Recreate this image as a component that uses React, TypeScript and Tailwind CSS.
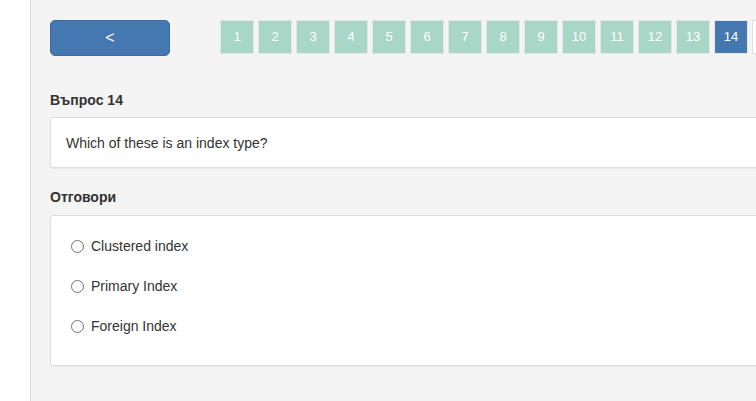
import React from "react";

export default function App() {
  const pages = Array.from({ length: 14 }, (_, i) => i + 1);
  const answers = ["Clustered index", "Primary Index", "Foreign Index"];
  return (
    <div
      className="flex w-[756px] h-[401px] overflow-hidden bg-[#f4f4f4] text-[#333]"
      style={{ fontFamily: '"Liberation Sans", Arial, sans-serif' }}
    >
      <div className="w-[31px] shrink-0 bg-white border-r border-[#dcdcdc]" />
      <div className="shrink-0 w-[900px] pl-[19px] pt-[20px]">
        <div className="flex items-start">
          <button className="w-[120px] h-[36px] rounded-[5px] bg-[#4577b0] border border-[#3d6ba0] text-white text-[16px] flex items-center justify-center">
            &lt;
          </button>
          <div className="flex gap-[4px] ml-[50px]">
            {pages.map((p) => (
              <div
                key={p}
                className={
                  p === 14
                    ? "w-[34px] h-[34px] flex items-center justify-center text-[13px] text-white bg-[#4577b0] border border-[#e8e8e8]"
                    : "w-[34px] h-[34px] flex items-center justify-center text-[13px] text-white bg-[#a8d7c8] border border-[#e6e6e6]"
                }
              >
                {p}
              </div>
            ))}
            <div className="w-[34px] h-[34px] bg-white border border-[#e0e0e0]" />
          </div>
        </div>
        <div className="mt-[34px] text-[14px] font-bold leading-[20px]">Въпрос 14</div>
        <div className="mt-[7px] h-[51px] bg-white border border-[#dddddd] rounded-[3px] shadow-[0_1px_1px_rgba(0,0,0,0.05)] flex items-center pl-[15px] pt-[1px] text-[14px]">
          Which of these is an index type?
        </div>
        <div className="mt-[19px] text-[14px] font-bold leading-[20px]">Отговори</div>
        <div className="mt-[8px] h-[151px] bg-white border border-[#dddddd] rounded-[3px] shadow-[0_1px_1px_rgba(0,0,0,0.05)] pt-[10px] pl-[20px]">
          {answers.map((a) => (
            <div key={a} className="flex items-center h-[40px] text-[14px]">
              <span className="w-[13px] h-[13px] rounded-full border border-[#6f6f6f] bg-white mr-[7px]" />
              {a}
            </div>
          ))}
        </div>
      </div>
    </div>
  );
}
